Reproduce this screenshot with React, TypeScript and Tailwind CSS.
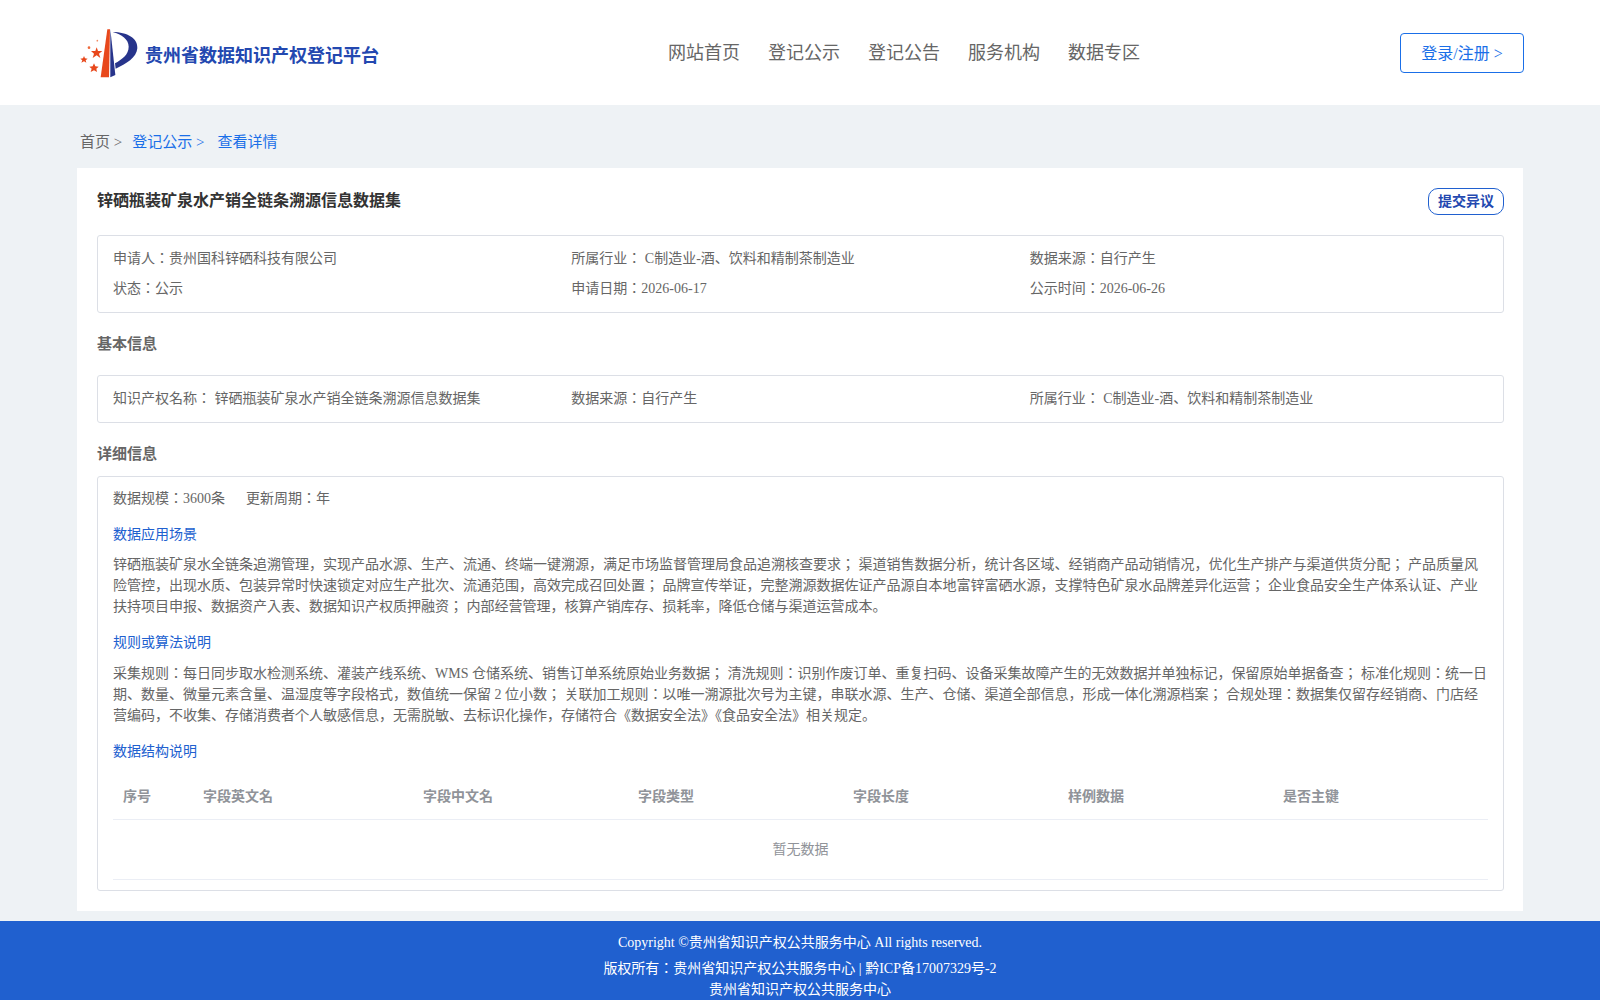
const navItems = ["网站首页", "登记公示", "登记公告", "服务机构", "数据专区"];
const columns = ["序号", "字段英文名", "字段中文名", "字段类型", "字段长度", "样例数据", "是否主键"];

function Logo() {
  return (
    <svg viewBox="21 0 204 195" className="w-[68px] h-[65px] shrink-0">
      <path d="M112 28 L120 28 L117 172 L92 172 Z" fill="#e8481c" />
      <path d="M121 28 L136 165 L121 172 Z" fill="#27348b" />
      <path d="M128 36 C172 36 204 55 202 85 C200 113 168 132 137 146 L135 130 C155 118 176 105 176 80 C176 58 155 43 128 36 Z" fill="#27348b" />
      <path d="M80 82 L84 93 L97 93 L87 101 L91 114 L80 106 L68 114 L72 101 L63 93 L76 93 Z" fill="#e8481c" />
      <path d="M42 108 L45 115 L53 116 L47 121 L49 128 L42 124 L34 128 L37 121 L31 116 L39 115 Z" fill="#e8481c" />
      <path d="M72 130 L76 139 L86 140 L79 146 L81 156 L72 151 L62 156 L65 146 L58 140 L68 139 Z" fill="#e8481c" />
      <circle cx="57" cy="83" r="4" fill="#ee6a3c" />
      <circle cx="82" cy="62" r="2.5" fill="#f08a64" />
    </svg>
  );
}

function Field({ children }: { children: React.ReactNode }) {
  return <div className="h-[30px] leading-[30px]">{children}</div>;
}

function SectionLink({ children }: { children: React.ReactNode }) {
  return <div className="text-[#2060cf] leading-[21px]">{children}</div>;
}

export default function App() {
  return (
    <div className="min-h-[1000px] bg-[#eef2f5] text-[14px] text-[#666] font-['Liberation_Serif','Noto_Sans_CJK_JP',serif]">
      <header className="h-[105px] bg-white flex items-center pl-[77px] pr-[76px]">
        <div className="w-[500px] flex items-center">
          <Logo />
          <span className="pt-[8px] text-[18px] font-bold text-[#2348b0]">贵州省数据知识产权登记平台</span>
        </div>
        <nav className="ml-[91px] mt-[2px] flex gap-[28px] text-[18px] text-[#666]">
          {navItems.map((item) => (
            <a key={item}>{item}</a>
          ))}
        </nav>
        <button className="ml-auto w-[124px] h-[40px] pt-[2px] border border-[#1a6fe8] rounded text-[16px] text-[#1a6fe8]">
          登录/注册 &gt;
        </button>
      </header>

      <div className="h-[62px] pt-[12px] pl-[80px] flex items-center text-[15px]">
        <span>首页 &gt;</span>
        <span className="ml-[10px] text-[#1a6fe8]">登记公示 &gt;</span>
        <span className="ml-[13px] text-[#1a6fe8]">查看详情</span>
      </div>

      <main className="mx-[77px] w-[1446px] h-[743px] mt-[1px] bg-white pl-[20px] pr-[19px] pt-[20px]">
        <div className="flex justify-between items-start">
          <h1 className="text-[16px] font-bold text-[#333] leading-[26px]">锌硒瓶装矿泉水产销全链条溯源信息数据集</h1>
          <button className="w-[76px] h-[27px] rounded-[10px] border border-[#2060cf] text-[14px] font-bold text-[#2348b0]">
            提交异议
          </button>
        </div>

        <div className="mt-[20px] h-[78px] border border-[#dcdfe6] rounded-[3px] px-[15px] pt-[8px] grid grid-cols-3 content-start">
          <Field>申请人：贵州国科锌硒科技有限公司</Field>
          <Field>所属行业： C制造业-酒、饮料和精制茶制造业</Field>
          <Field>数据来源：自行产生</Field>
          <Field>状态：公示</Field>
          <Field>申请日期：2026-06-17</Field>
          <Field>公示时间：2026-06-26</Field>
        </div>

        <h2 className="mt-[20px] font-bold text-[15px] leading-[22px]">基本信息</h2>

        <div className="mt-[20px] h-[48px] pb-[2px] border border-[#dcdfe6] rounded-[3px] px-[15px] grid grid-cols-3 items-center">
          <div>知识产权名称： 锌硒瓶装矿泉水产销全链条溯源信息数据集</div>
          <div>数据来源：自行产生</div>
          <div>所属行业： C制造业-酒、饮料和精制茶制造业</div>
        </div>

        <h2 className="mt-[20px] font-bold text-[15px] leading-[22px]">详细信息</h2>

        <div className="mt-[11px] h-[415px] border border-[#dcdfe6] rounded-[3px] px-[15px] pt-[11px]">
          <div className="leading-[21px]">
            数据规模：3600条<span className="ml-[21px]">更新周期：年</span>
          </div>
          <div className="mt-[15px]">
            <SectionLink>数据应用场景</SectionLink>
          </div>
          <p className="mt-[9px] leading-[21px]">
            锌硒瓶装矿泉水全链条追溯管理，实现产品水源、生产、流通、终端一键溯源，满足市场监督管理局食品追溯核查要求； 渠道销售数据分析，统计各区域、经销商产品动销情况，优化生产排产与渠道供货分配； 产品质量风险管控，出现水质、包装异常时快速锁定对应生产批次、流通范围，高效完成召回处置； 品牌宣传举证，完整溯源数据佐证产品源自本地富锌富硒水源，支撑特色矿泉水品牌差异化运营； 企业食品安全生产体系认证、产业扶持项目申报、数据资产入表、数据知识产权质押融资； 内部经营管理，核算产销库存、损耗率，降低仓储与渠道运营成本。
          </p>
          <div className="mt-[15px]">
            <SectionLink>规则或算法说明</SectionLink>
          </div>
          <p className="mt-[10px] leading-[21px]">
            采集规则：每日同步取水检测系统、灌装产线系统、WMS 仓储系统、销售订单系统原始业务数据； 清洗规则：识别作废订单、重复扫码、设备采集故障产生的无效数据并单独标记，保留原始单据备查； 标准化规则：统一日期、数量、微量元素含量、温湿度等字段格式，数值统一保留 2 位小数； 关联加工规则：以唯一溯源批次号为主键，串联水源、生产、仓储、渠道全部信息，形成一体化溯源档案； 合规处理：数据集仅留存经销商、门店经营编码，不收集、存储消费者个人敏感信息，无需脱敏、去标识化操作，存储符合《数据安全法》《食品安全法》相关规定。
          </p>
          <div className="mt-[15px]">
            <SectionLink>数据结构说明</SectionLink>
          </div>
          <div className="mt-[12px] h-[46px] border-b border-[#ebeef5] grid grid-cols-[80px_220px_repeat(5,1fr)] items-center font-bold text-[#909399]">
            {columns.map((col) => (
              <div key={col} className="pl-[10px]">{col}</div>
            ))}
          </div>
          <div className="h-[60px] border-b border-[#ebeef5] flex items-center justify-center text-[#909399]">
            暂无数据
          </div>
        </div>
      </main>

      <footer className="mt-[10px] h-[79px] bg-[#2060cf] text-white text-center pt-[12px]">
        <div className="leading-[20px]">Copyright ©贵州省知识产权公共服务中心 All rights reserved.</div>
        <div className="mt-[5px] leading-[21px]">版权所有：贵州省知识产权公共服务中心 | 黔ICP备17007329号-2</div>
        <div className="leading-[21px]">贵州省知识产权公共服务中心</div>
      </footer>
    </div>
  );
}
